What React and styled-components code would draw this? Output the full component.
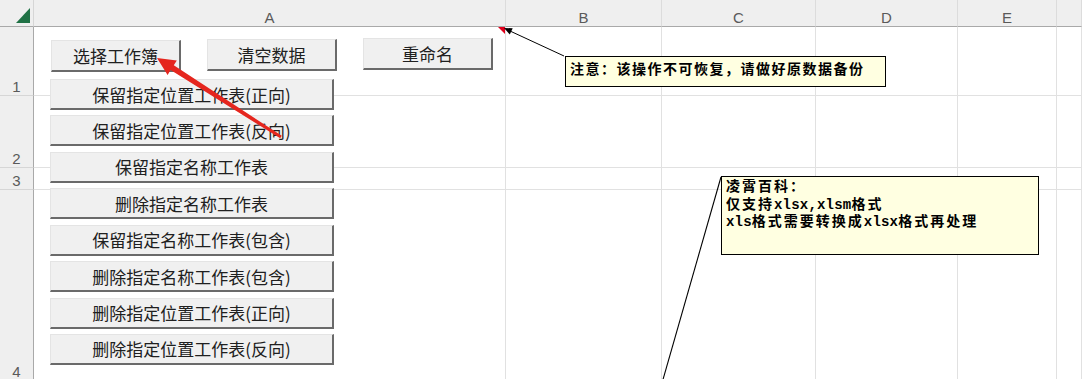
import React from "react";
import styled, { createGlobalStyle, css } from "styled-components";

const Global = createGlobalStyle`
  html, body { margin: 0; padding: 0; background: #fff; overflow: hidden; }
  #root { width: 1082px; height: 379px; }
`;

const Page = styled.div`
  position: relative;
  width: 1082px;
  height: 379px;
  overflow: hidden;
  background: #fff;
`;

const Grid = styled.div`
  display: grid;
  grid-template-columns: 34px 472px 156px 154px 142px 99px 1fr;
  grid-template-rows: 27px 69px 72px 22px 191px;
`;

const headBase = css`
  box-sizing: border-box;
  background: #efefef;
  color: #5a5a5a;
  font-family: "Liberation Sans", Arial, sans-serif;
  font-size: 15px;
  line-height: 15px;
  display: flex;
  justify-content: center;
  align-items: flex-end;
  padding-bottom: 1px;
`;

const Corner = styled.div`
  ${headBase}
  justify-content: flex-end;
  padding: 0 3px 3px 0;
  border-right: 1px solid #d6d6d6;
  border-bottom: 1px solid #a9a9a9;
`;

const ColHead = styled.div`
  ${headBase}
  border-right: 1px solid #dcdcdc;
  border-bottom: 1px solid #a9a9a9;
`;

const RowHead = styled.div`
  ${headBase}
  border-right: 1px solid #a9a9a9;
  border-bottom: 1px solid #d6d6d6;
`;

const Cell = styled.div`
  box-sizing: border-box;
  border-right: 1px solid #e1e1e1;
  border-bottom: 1px solid #e1e1e1;
  background: #fff;
`;

const ButtonPanel = styled.div`
  position: absolute;
  left: 50px;
  top: 38px;
  display: flex;
  flex-direction: column;
`;

const TopRow = styled.div`
  display: flex;
  align-items: flex-start;
  gap: 26px;
  padding-left: 1px;
`;

const LongList = styled.div`
  display: flex;
  flex-direction: column;
  gap: 5.43px;
  margin-top: 7px;
`;

const FormButton = styled.button`
  box-sizing: border-box;
  margin: ${(p) => p.$dy || 0}px 0 0 0;
  padding: 0;
  width: ${(p) => (p.$wide ? 284 : 130)}px;
  height: ${(p) => (p.$wide ? 31 : 32)}px;
  background: #f0f0f0;
  border-top: 1px solid #e4e4e4;
  border-left: 1px solid #e4e4e4;
  border-right: 2px solid #6a6a6a;
  border-bottom: 2px solid #6a6a6a;
  border-radius: 0;
  display: flex;
  align-items: center;
  justify-content: center;
  font-family: "Noto Sans CJK SC", sans-serif;
  font-size: 17px;
  font-weight: 400;
  line-height: 1;
  color: #202020;
  white-space: nowrap;
`;

const Drawing = styled.svg`
  position: absolute;
  left: 0;
  top: 0;
  width: 1082px;
  height: 379px;
  pointer-events: none;
`;

const Note = styled.div`
  position: absolute;
  left: ${(p) => p.$x}px;
  top: ${(p) => p.$y}px;
  width: ${(p) => p.$w}px;
  height: ${(p) => p.$h}px;
  box-sizing: border-box;
  border: 1px solid #000;
  background: #ffffe1;
  padding: ${(p) => p.$pt}px 4px 0 4px;
  font-family: "Noto Sans CJK SC", sans-serif;
  font-weight: 700;
  font-size: 14px;
  letter-spacing: ${(p) => p.$ls}px;
  line-height: 17.5px;
  color: #000;
  white-space: nowrap;
`;

const NoteLine = styled.div`
  height: 17.5px;
  overflow: visible;
`;

const Latin = styled.span`
  font-family: "Liberation Mono", monospace;
  letter-spacing: 0.2px;
`;

const mixed = (s) =>
  s.split(/([\x21-\x7e]+)/).map((part, i) =>
    /^[\x21-\x7e]+$/.test(part) ? <Latin key={i}>{part}</Latin> : part
  );

const columns = ["A", "B", "C", "D", "E", ""];
const rows = ["1", "2", "3", "4"];

const topButtons = [
  { label: "选择工作簿", dy: 2 },
  { label: "清空数据", dy: 1 },
  { label: "重命名", dy: 0 },
];

const longButtons = [
  "保留指定位置工作表(正向)",
  "保留指定位置工作表(反向)",
  "保留指定名称工作表",
  "删除指定名称工作表",
  "保留指定名称工作表(包含)",
  "删除指定名称工作表(包含)",
  "删除指定位置工作表(正向)",
  "删除指定位置工作表(反向)",
];

export default function App() {
  return (
    <>
      <Global />
      <Page>
        <Grid>
          <Corner>
            <svg width="14" height="15" viewBox="0 0 14 15">
              <polygon points="0,15 14,15 14,0" fill="#1f7145" />
            </svg>
          </Corner>
          {columns.map((c, i) => (
            <ColHead key={"h" + i}>{c}</ColHead>
          ))}
          {rows.map((r) => (
            <React.Fragment key={r}>
              <RowHead>{r}</RowHead>
              {columns.map((c, i) => (
                <Cell key={r + i} />
              ))}
            </React.Fragment>
          ))}
        </Grid>

        <ButtonPanel>
          <TopRow>
            {topButtons.map((b) => (
              <FormButton key={b.label} $dy={b.dy}>
                {b.label}
              </FormButton>
            ))}
          </TopRow>
          <LongList>
            {longButtons.map((b) => (
              <FormButton key={b} $wide>
                {b}
              </FormButton>
            ))}
          </LongList>
        </ButtonPanel>

        <Drawing viewBox="0 0 1082 379">
          <polygon points="498,27 505,27 505,34" fill="#e0001b" />
          <line x1="564" y1="56" x2="510" y2="31" stroke="#000" strokeWidth="1" />
          <polygon points="504,28 512.7,28.2 509.8,34.6" fill="#000" />
          <line x1="721" y1="177" x2="660" y2="390" stroke="#000" strokeWidth="1.1" />
          <polygon
            points="157,58 176.8,60.5 173.8,65.3 281.8,135.8 280.2,138.2 170.6,70.1 167.6,74.9"
            fill="#e5261e"
          />
        </Drawing>

        <Note $x={565} $y={56} $w={321} $h={31} $pt={3} $ls={1.5}>
          <NoteLine>{mixed("注意：该操作不可恢复，请做好原数据备份")}</NoteLine>
        </Note>
        <Note $x={721} $y={176} $w={318} $h={79} $pt={0} $ls={2}>
          <NoteLine>{mixed("凌霄百科：")}</NoteLine>
          <NoteLine>{mixed("仅支持xlsx,xlsm格式")}</NoteLine>
          <NoteLine>{mixed("xls格式需要转换成xlsx格式再处理")}</NoteLine>
        </Note>
      </Page>
    </>
  );
}
